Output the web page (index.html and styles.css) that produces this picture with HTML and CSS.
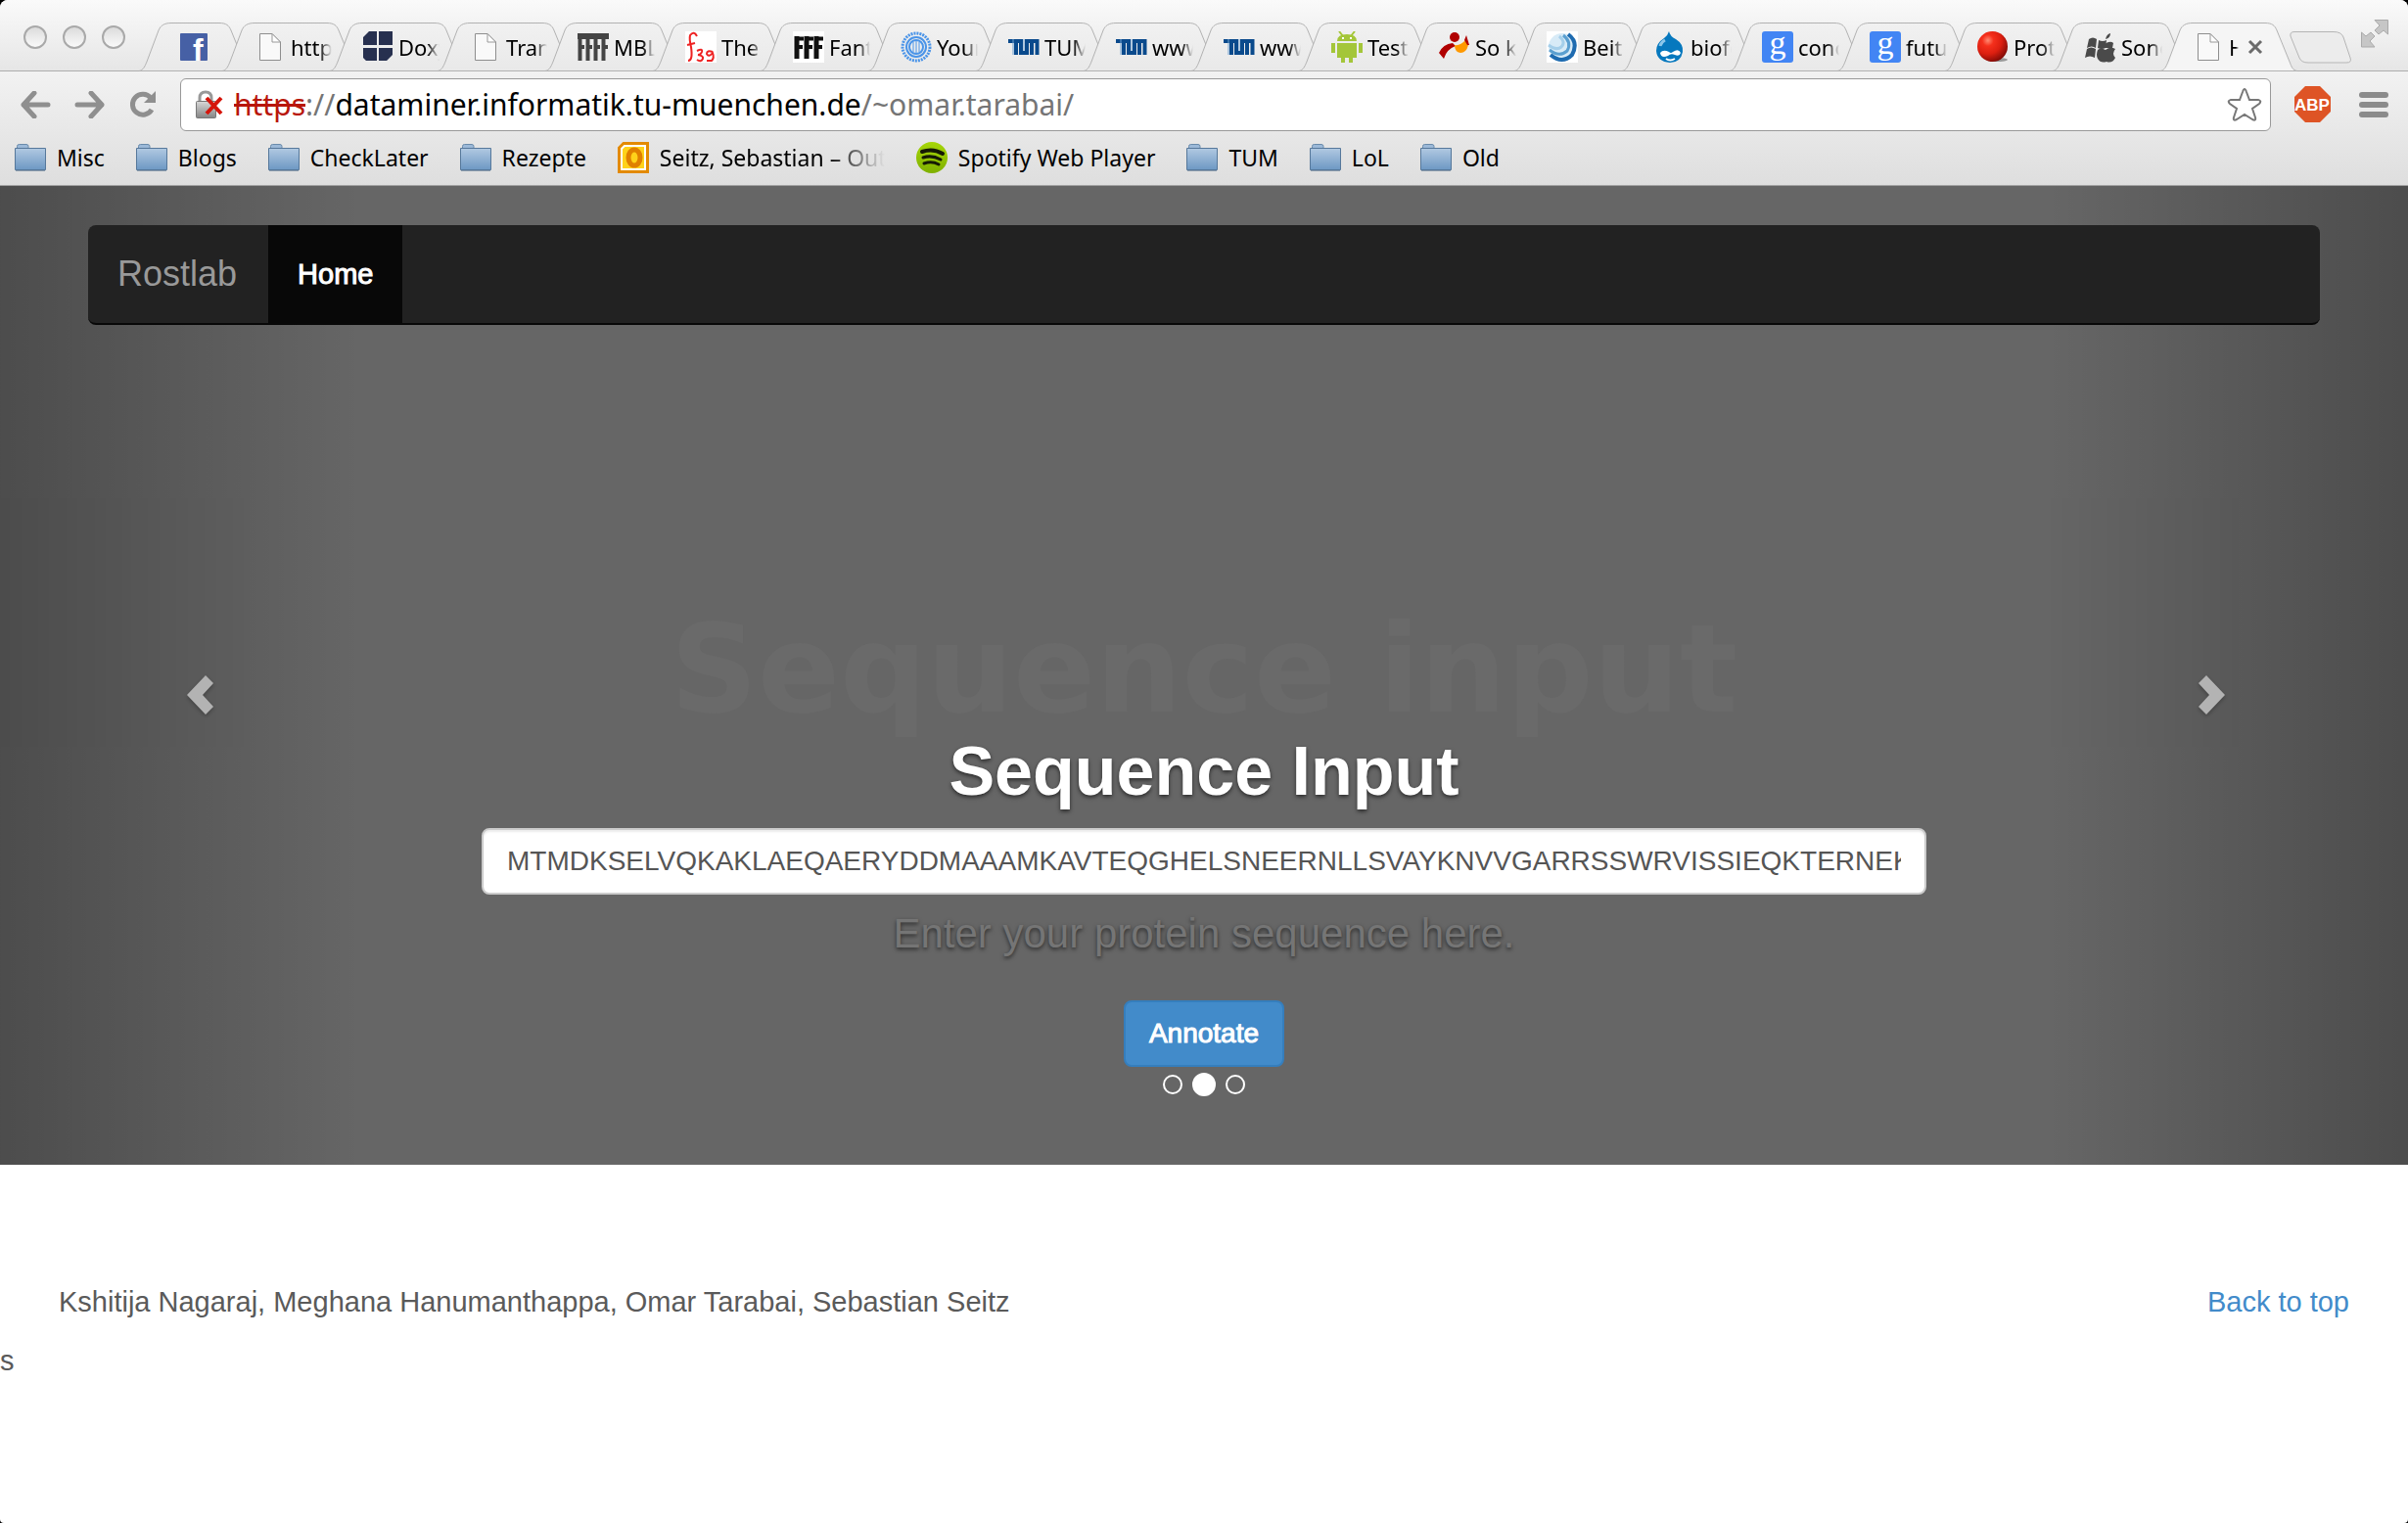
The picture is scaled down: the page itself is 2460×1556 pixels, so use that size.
FILE: index.html
```html
<!DOCTYPE html>
<html lang="en">
<head>
<meta charset="utf-8">
<title>Home</title>
<link rel="stylesheet" href="styles.css">
</head>
<body>
<svg class="defs" aria-hidden="true">
  <defs>
    <linearGradient id="gTab" x1="0" y1="0" x2="0" y2="1"><stop offset="0" stop-color="#f1f1f1"/><stop offset="1" stop-color="#e9e9e9"/></linearGradient>
    <linearGradient id="gFolder" x1="0" y1="0" x2="0" y2="1"><stop offset="0" stop-color="#b1c9e2"/><stop offset="1" stop-color="#6d98c3"/></linearGradient>
    <linearGradient id="gGrey" x1="0" y1="0" x2="0" y2="1"><stop offset="0" stop-color="#d8d8d8"/><stop offset="1" stop-color="#858585"/></linearGradient>
    <radialGradient id="gRed" cx=".35" cy=".3" r=".75"><stop offset="0" stop-color="#ff8a72"/><stop offset=".25" stop-color="#f5301c"/><stop offset=".6" stop-color="#dc1f10"/><stop offset="1" stop-color="#7d0a06"/></radialGradient>
    <linearGradient id="gSpot" x1="0" y1="0" x2="0" y2="1"><stop offset="0" stop-color="#a6d608"/><stop offset="1" stop-color="#7fb000"/></linearGradient>
  </defs>
  <symbol id="tab" viewBox="-14 0 142 50"><path d="M-13 49.500C-9 49-7 45-5 40L7 8C9 3 13 .5 20 .5H94C101 .5 104 3 106 8L119 40C121 45 122 49 127 49.500Z"/></symbol>
  <symbol id="tab-pin" viewBox="-14 0 117 50"><path d="M-13 49.500C-9 49-7 45-5 40L7 8C9 3 13 .5 20 .5H69C76 .5 79 3 81 8L94 40C96 45 97 49 102 49.500Z"/></symbol>
  <symbol id="doc" viewBox="0 0 32 32"><path d="M5.500 2.500H18L26.500 11V29.500H5.500Z" fill="#f9f9f9" stroke="#8e8e8e"/><path d="M18 2.500V11H26.500Z" fill="#fff" stroke="#999"/></symbol>
  <symbol id="folder" viewBox="0 0 32 30"><path d="M2.500 8V3.500Q2.500 1.500 4.500 1.500H12Q14 1.500 14 3.500V8Z" fill="#9cb9d8" stroke="#6a8bab"/><path d="M.5 5.500H31.500V27.500H.5Z" fill="url(#gFolder)" stroke="#56789b"/><path d="M1 28.500H31" stroke="#8a9aaa"/></symbol>
  <symbol id="google" viewBox="0 0 32 32"><rect width="32" height="32" rx="3" fill="#4285f4"/><text x="16" y="23" text-anchor="middle" font-family="Liberation Serif, serif" font-size="34" fill="#fff">g</text></symbol>
  <symbol id="tum" viewBox="0 0 32 32"><path d="M0 10H8V24M8 10H13V22H19V10H29.500V24M24 10V24" fill="none" stroke="#0a4a8c" stroke-width="4"/><path d="M5 8V24M16 20V8" stroke="#6fa0d0" stroke-width="1"/></symbol>
</svg>

<div class="window">
  <header class="browser">
    <div class="strip">
      <div class="lights"><span></span><span></span><span></span></div>
      <div class="tabs">
        <div class="tab tab-pinned"><svg class="shape" viewBox="-14 0 117 50"><use href="#tab-pin" x="-14" width="117" height="50"/></svg>
          <svg class="icon" viewBox="0 0 32 32"><rect x="2" y="2" width="28" height="28" rx="1" fill="#4660a5"/><text x="15" y="30" font-family="Liberation Sans, sans-serif" font-weight="bold" font-size="32" fill="#fff">f</text></svg></div>
        <div class="tab"><svg class="shape"><use href="#tab"/></svg><svg class="icon"><use href="#doc"/></svg><span>http:</span></div>
        <div class="tab"><svg class="shape"><use href="#tab"/></svg>
          <svg class="icon" viewBox="0 0 32 32" fill="#27304f"><path d="M7 0H15V14H1V6ZM17 0H31V14H17ZM1 17H15V30H4L1 27ZM17 17H31V24L25 30H17Z"/></svg><span>Doxy</span></div>
        <div class="tab"><svg class="shape"><use href="#tab"/></svg><svg class="icon"><use href="#doc"/></svg><span>Trans</span></div>
        <div class="tab"><svg class="shape"><use href="#tab"/></svg>
          <svg class="icon" viewBox="0 0 32 32" fill="none" stroke="#444"><path d="M0 5H32" stroke-width="6"/><path d="M2.500 2V30M10.500 2V30M18.500 2V30M26.500 2V30" stroke-width="4"/><path d="M4 16H7M12 16H15M20 16H23M28 16H31" stroke-width="4"/></svg><span>MBL</span></div>
        <div class="tab"><svg class="shape"><use href="#tab"/></svg>
          <svg class="icon" viewBox="0 0 32 32"><rect width="32" height="32" fill="#fff"/><g fill="none" stroke="#e22" stroke-width="2"><path d="M12 5Q9-1 5 4Q4 8 6 16Q8 30 3 30M2 14L10 12"/><path d="M12 20Q18 17 17 21Q16 24 13 24Q19 25 18 28Q16 32 12 29M28 21Q22 19 22 23Q24 27 28 22Q30 27 27 30H22"/></g></svg><span>The</span></div>
        <div class="tab"><svg class="shape"><use href="#tab"/></svg>
          <svg class="icon" viewBox="0 0 32 32"><rect width="32" height="32" fill="#fff"/><g fill="none" stroke="#111"><path d="M4 5V28M14 5V28M24 5V28" stroke-width="5"/><path d="M4 7.500H11M14 7.500H21M24 7.500H31M4 16H10M14 16H20M24 16H30" stroke-width="4"/></g></svg><span>Fanta</span></div>
        <div class="tab"><svg class="shape"><use href="#tab"/></svg>
          <svg class="icon" viewBox="0 0 32 32" fill="none" stroke="#4a94e8"><circle cx="16" cy="16" r="14" stroke-width="3" stroke-dasharray="2 1"/><circle cx="16" cy="16" r="10" stroke-width="2"/><circle cx="16" cy="16" r="7" stroke-width="2"/><path d="M13 11V21M16 10V22M19 11V21"/></svg><span>Your</span></div>
        <div class="tab"><svg class="shape"><use href="#tab"/></svg><svg class="icon"><use href="#tum"/></svg><span>TUM</span></div>
        <div class="tab"><svg class="shape"><use href="#tab"/></svg><svg class="icon"><use href="#tum"/></svg><span>www</span></div>
        <div class="tab"><svg class="shape"><use href="#tab"/></svg><svg class="icon"><use href="#tum"/></svg><span>www</span></div>
        <div class="tab"><svg class="shape"><use href="#tab"/></svg>
          <svg class="icon" viewBox="0 0 32 32" fill="#a4c639"><path d="M6 10Q6 3 16 3Q26 3 26 10ZM6 12H26V27H6ZM0 12H4V22H0ZM28 12H32V22H28ZM10 27H14V32H10ZM18 27H22V32H18Z"/><path d="M8 0L12 5M24 0L20 5" stroke="#a4c639" stroke-width="2"/><path d="M11 6H13V8H11ZM19 6H21V8H19Z" fill="#fff"/></svg><span>Testi</span></div>
        <div class="tab"><svg class="shape"><use href="#tab"/></svg>
          <svg class="icon" viewBox="0 0 32 32"><circle cx="16" cy="6" r="5" fill="#b00000"/><path d="M0 22Q4 13 14 12L17 15Q8 18 5 28Z" fill="#b00000"/><path d="M16 14Q22 15 27 9L30 14Q28 22 22 22Q16 21 16 14Z" fill="#f90"/><path d="M26 9L28 4L31 14L29 14Z" fill="#b00000"/></svg><span>So ke</span></div>
        <div class="tab"><svg class="shape"><use href="#tab"/></svg>
          <svg class="icon" viewBox="0 0 32 32"><rect width="32" height="32" fill="#fff"/><circle cx="16" cy="16" r="14" fill="#d8ebf7"/><g fill="none"><path d="M22 3Q33 11 26 24Q16 34 4 24" stroke="#1e6bb0" stroke-width="4"/><path d="M17 4Q26 11 21 20Q13 27 3 19" stroke="#5a9fd0" stroke-width="3"/><path d="M13 5Q20 11 15 16Q10 20 2 14" stroke="#a5cfea" stroke-width="3"/></g></svg><span>Beitra</span></div>
        <div class="tab"><svg class="shape"><use href="#tab"/></svg>
          <svg class="icon" viewBox="0 0 32 32"><path d="M15 0Q16 5 22 8Q30 13 29 21Q27 32 16 32Q3 31 2 20Q2 12 10 7Q14 4 15 0Z" fill="#0678be"/><path d="M6 22Q9 18 15 21Q17 23 19 21Q25 17 27 22Q26 26 21 24Q17 22 14 25Q7 28 6 22Z" fill="#fff"/><path d="M12 28Q16 31 21 28" stroke="#fff" fill="none" stroke-width="2"/><path d="M6 15Q7 11 11 9" stroke="#8cc6ea" fill="none" stroke-width="3"/></svg><span>biofo</span></div>
        <div class="tab"><svg class="shape"><use href="#tab"/></svg><svg class="icon"><use href="#google"/></svg><span>conc</span></div>
        <div class="tab"><svg class="shape"><use href="#tab"/></svg><svg class="icon"><use href="#google"/></svg><span>futur</span></div>
        <div class="tab"><svg class="shape"><use href="#tab"/></svg>
          <svg class="icon" viewBox="0 0 32 32"><ellipse cx="20" cy="29" rx="11" ry="2" fill="#999"/><circle cx="15.500" cy="15.500" r="15.500" fill="url(#gRed)"/></svg><span>Prote</span></div>
        <div class="tab"><svg class="shape"><use href="#tab"/></svg>
          <svg class="icon" viewBox="0 0 32 32" fill="#4a4a4a"><path d="M4 8Q8 5 12 8L11 17Q7 14 2 17ZM14 9Q18 11 22 9L21 17Q17 19 13 17ZM2 18Q6 15 11 18L10 27Q5 24 0 27Z"/><path d="M13 19Q16 16 21 19Q26 15 31 18Q27 23 31 27Q28 33 22 31Q16 33 13 28Q11 24 13 19ZM21 8Q22 3 26 2Q26 7 21 8ZM20 13Q26 9 29 12L28 17H21Z"/></svg><span>Sono</span></div>
        <div class="tab tab-active"><svg class="shape"><use href="#tab"/></svg><svg class="icon"><use href="#doc"/></svg><span>Ho</span>
          <button class="plain close" aria-label="Close tab"><svg viewBox="0 0 16 16" width="16" height="16"><path d="M2 2L14 14M14 2L2 14" stroke="#6b6b6b" stroke-width="3"/></svg></button></div>
      </div>
      <button class="plain newtab" aria-label="New tab"><svg width="64" height="33" viewBox="0 0 64 33"><path d="M5 .5H45Q53 .5 55 6L62 27Q64 32 58 32H19Q12 32 10 27L1 5Q0 .5 5 .5Z" fill="#ececec" stroke="#b5b5b5"/></svg></button>
      <button class="plain full" aria-label="Full screen"><svg width="28" height="30" viewBox="0 0 28 30" fill="#c6c6c6" stroke="#aaa"><path d="M14 .5H27.500V15L23 11L18 15L14 11L19 6Z"/><path d="M.5 13L5 17L10 13L14 17L9 22L14 28H.5Z"/></svg></button>
    </div>

    <div class="toolbar">
      <button class="plain" aria-label="Back"><svg width="32" height="28" viewBox="0 0 32 28" fill="none" stroke="#8f8f8f" stroke-width="5"><path d="M15 2L4 14L15 26M4 14H29" stroke-linecap="round" stroke-linejoin="round"/></svg></button>
      <button class="plain" aria-label="Forward"><svg width="32" height="28" viewBox="0 0 32 28" fill="none" stroke="#8f8f8f" stroke-width="5"><path d="M17 2L28 14L17 26M28 14H3" stroke-linecap="round" stroke-linejoin="round"/></svg></button>
      <button class="plain" aria-label="Reload"><svg width="28" height="28" viewBox="0 0 28 28"><path d="M22 7A10.500 10.500 0 1 0 23 19" fill="none" stroke="#8f8f8f" stroke-width="5"/><path d="M27 0V12H15Z" fill="#8f8f8f"/></svg></button>
      <div class="omnibox">
        <svg width="30" height="30" viewBox="0 0 30 30"><path d="M5 13V8Q5 2 11 2Q17 2 17 8V13" fill="none" stroke="#999" stroke-width="3"/><rect x="1.500" y="11.500" width="20" height="17" rx="1" fill="url(#gGrey)" stroke="#777"/><path d="M12 8L27 24M27 8L12 24" stroke="#d5150b" stroke-width="4"/></svg>
        <div class="url"><span class="bad">https</span><span class="dim">://</span>dataminer.informatik.tu-muenchen.de<span class="dim">/~omar.tarabai/</span></div>
        <button class="plain" aria-label="Bookmark this page"><svg width="36" height="36" viewBox="0 0 36 36"><path d="M18 2Q19 2 20 5L23 13L32 13Q36 14 33 17L26 22L29 31Q30 35 26 33L18 28L10 33Q6 35 7 31L10 22L3 17Q0 14 4 13L13 13L16 5Q17 2 18 2Z" fill="#fff" stroke="#777" stroke-width="2"/></svg></button>
      </div>
      <div class="extras">
        <button class="plain" aria-label="Adblock Plus"><svg width="38" height="38" viewBox="0 0 38 38"><path d="M11 0H26L37 11V26L26 37H11L0 26V11Z" fill="#de5425"/><text x="18" y="25" text-anchor="middle" font-family="Liberation Sans, sans-serif" font-weight="bold" font-size="17" fill="#fff">ABP</text></svg></button>
        <button class="plain" aria-label="Menu"><svg width="30" height="28" viewBox="0 0 30 28" fill="#8b8b8b"><rect y="1" width="30" height="6" rx="3"/><rect y="11" width="30" height="6" rx="3"/><rect y="21" width="30" height="6" rx="3"/></svg></button>
      </div>
    </div>

    <nav class="bookmarks" aria-label="Bookmarks">
      <a href="#"><svg class="folder"><use href="#folder"/></svg>Misc</a>
      <a href="#"><svg class="folder"><use href="#folder"/></svg>Blogs</a>
      <a href="#"><svg class="folder"><use href="#folder"/></svg>CheckLater</a>
      <a href="#"><svg class="folder"><use href="#folder"/></svg>Rezepte</a>
      <a href="#"><svg class="mark" viewBox="0 0 32 32"><path d="M6 1.500H30.500V30.500H1.500V6Z" fill="#ffd21a" stroke="#e38a00" stroke-width="3"/><path d="M7 4H28V28H4V7Z" fill="none" stroke="#fff" stroke-width="2"/><ellipse cx="17" cy="16" rx="6" ry="8" fill="none" stroke="#e08000" stroke-width="5"/></svg><span class="faded">Seitz, Sebastian – Outlook</span></a>
      <a href="#"><svg class="mark" viewBox="0 0 32 32"><circle cx="16" cy="16" r="16" fill="url(#gSpot)"/><g fill="none" stroke="#151a05" stroke-linecap="round"><path d="M6 10Q17 6 27 12" stroke-width="4"/><path d="M7 16Q16 13 25 18" stroke-width="3"/><path d="M8 22Q16 19 23 23" stroke-width="3"/></g></svg>Spotify Web Player</a>
      <a href="#"><svg class="folder"><use href="#folder"/></svg>TUM</a>
      <a href="#"><svg class="folder"><use href="#folder"/></svg>LoL</a>
      <a href="#"><svg class="folder"><use href="#folder"/></svg>Old</a>
    </nav>
  </header>

  <main class="carousel" id="top">
    <nav class="navbar">
      <a class="brand" href="#">Rostlab</a>
      <a class="active" href="#">Home</a>
    </nav>
    <form class="caption">
      <div class="ghost" aria-hidden="true">Sequence input</div>
      <h1><label for="sequence">Sequence Input</label></h1>
      <input id="sequence" type="text" value="MTMDKSELVQKAKLAEQAERYDDMAAAMKAVTEQGHELSNEERNLLSVAYKNVVGARRSSWRVISSIEQKTERNEKKQQ">
      <p>Enter your protein sequence here.</p>
      <button class="annotate" type="button">Annotate</button>
    </form>
    <div class="indicators">
      <button aria-label="Slide 1"></button><button class="on" aria-label="Slide 2"></button><button aria-label="Slide 3"></button>
    </div>
    <a class="control prev" href="#" aria-label="Previous"><svg width="30" height="42" viewBox="0 0 30 42"><path d="M20 1L28 9L17 21L28 33L20 41L1 21Z" fill="#fff"/></svg></a>
    <a class="control next" href="#" aria-label="Next"><svg width="30" height="42" viewBox="0 0 30 42"><path d="M10 1L2 9L13 21L2 33L10 41L29 21Z" fill="#fff"/></svg></a>
  </main>

  <footer class="footer">
    <p>Kshitija Nagaraj, Meghana Hanumanthappa, Omar Tarabai, Sebastian Seitz</p>
    <a href="#top">Back to top</a>
  </footer>
  <div class="stray">s</div>
</div>
</body>
</html>
```
FILE: styles.css
```css
* { box-sizing: border-box; }

html { background: #000; }

body {
  margin: 0;
  font-family: "Liberation Sans", Arial, sans-serif;
  font-size: 29px;
  line-height: 40px;
  color: #5a5a5a;
}

a { color: #428bca; text-decoration: none; }
svg { display: block; flex: none; }
.defs { position: absolute; width: 0; height: 0; }

.plain {
  border: 0;
  padding: 0;
  background: none;
  flex: none;
}

.window {
  min-height: 100vh;
  background: #fff;
  border-radius: 8px 8px 4px 4px;
  overflow: hidden;
}

/* Browser frame */
.browser {
  font-family: "Noto Sans", sans-serif;
  font-size: 23px;
  color: #000;
  background: linear-gradient(#fafafa 0, #e6e6e6 72px, #f2f2f2 73px, #dedede 100%);
  border-bottom: 1px solid #a0a0a0;
}

.strip {
  display: flex;
  height: 73px;
  border-bottom: 1px solid #adadad;
}

.lights {
  display: flex;
  gap: 16px;
  width: 155px;
  padding: 26px 0 0 24px;
}

.lights span {
  width: 24px;
  height: 24px;
  border: 2px solid #a9a9a9;
  border-radius: 50%;
  background: linear-gradient(#dcdcdc, #fafafa);
}

.tabs {
  display: flex;
  padding-top: 23px;
}

.tab {
  position: relative;
  isolation: isolate;
  display: flex;
  align-items: center;
  gap: 5px;
  width: 110px;
  height: 50px;
  padding-left: 20px;
  font-size: 22px;
}

.tab-pinned { width: 85px; padding-left: 27px; }

.shape {
  position: absolute;
  z-index: -1;
  left: -14px;
  top: 0;
  width: 142px;
  height: 50px;
  fill: url(#gTab);
  stroke: #b2b2b2;
}

.tab-pinned .shape { width: 117px; }

.icon { width: 32px; height: 32px; }

.tab span {
  width: 42px;
  overflow: hidden;
  white-space: nowrap;
  mask-image: linear-gradient(to right, #000 70%, transparent);
}

.tab .close { margin-left: 4px; }

.tab-active { z-index: 1; }
.tab-active .shape { fill: #f5f5f5; }
.tab-active span { width: 10px; }

.newtab { margin: 32px 0 0 9px; align-self: flex-start; }
.full { margin: 20px 20px 0 auto; align-self: flex-start; }

.toolbar {
  display: flex;
  align-items: center;
  gap: 24px;
  padding: 7px 20px 0;
}

.omnibox {
  flex: 1;
  display: flex;
  align-items: center;
  height: 54px;
  padding: 0 8px 0 14px;
  border: 1px solid #999;
  border-radius: 6px;
  background: #fff;
  gap: 10px;
}

.extras {
  display: flex;
  align-items: center;
  gap: 28px;
}

.url { flex: 1; font-size: 30px; white-space: nowrap; }
.dim { color: #757575; }
.bad { color: #b8160a; text-decoration: line-through; text-decoration-thickness: 3px; }

.bookmarks {
  display: flex;
  gap: 32px;
  padding: 7px 15px 8px;
}

.bookmarks a {
  display: flex;
  align-items: center;
  gap: 11px;
  color: #000;
  white-space: nowrap;
}

.folder { width: 32px; height: 30px; }
.mark { width: 32px; height: 32px; }

.faded {
  width: 230px;
  overflow: hidden;
  mask-image: linear-gradient(to right, #000 75%, transparent);
}

/* Carousel */
.carousel {
  position: relative;
  display: flex;
  flex-direction: column;
  min-height: 1000px;
  padding: 40px 90px 70px;
  background: #666;
}

.navbar {
  position: relative;
  z-index: 2;
  display: flex;
  background: #222;
  border-bottom: 2px solid #080808;
  border-radius: 8px;
}

.navbar a { padding: 30px; color: #fff; }
.navbar .brand { padding-right: 32px; font-size: 36px; color: #999; }
.navbar .active { background: #080808; -webkit-text-stroke: 1px #fff; }

.caption {
  display: flex;
  flex-direction: column;
  align-items: center;
  margin-top: auto;
  color: #fff;
  text-align: center;
}

.ghost {
  font: bold 124px/128px "DejaVu Sans", sans-serif;
  color: #6a6a6a;
}

.caption h1 {
  margin: 0 0 18px;
  font-size: 70px;
  line-height: 80px;
  text-shadow: 0 2px 4px rgba(0, 0, 0, .6);
}

.caption input {
  width: 1476px;
  max-width: 100%;
  height: 68px;
  padding: 0 24px;
  border: 2px solid #ccc;
  border-radius: 8px;
  box-shadow: inset 0 2px 2px rgba(0, 0, 0, .08);
  font: inherit;
  font-size: 28px;
  color: #555;
}

.caption p {
  margin: 10px 0 38px;
  font-size: 42px;
  line-height: 60px;
  color: #757575;
  text-shadow: 0 2px 4px rgba(0, 0, 0, .6);
}

.annotate {
  height: 68px;
  padding: 0 24px;
  border: 2px solid #357ebd;
  border-radius: 8px;
  background: #428bca;
  font: inherit;
  font-size: 28px;
  color: #fff;
  -webkit-text-stroke: 1px #fff;
}

.indicators {
  position: relative;
  z-index: 2;
  display: flex;
  justify-content: center;
  align-items: center;
  gap: 10px;
  margin-top: 6px;
}

.indicators button {
  width: 20px;
  height: 20px;
  padding: 0;
  border: 2px solid #fff;
  border-radius: 50%;
  background: none;
}

.indicators .on { width: 24px; height: 24px; background: #fff; }

.control {
  position: absolute;
  top: 0;
  bottom: 0;
  width: 15%;
  display: flex;
  align-items: center;
  justify-content: center;
  padding-top: 40px;
  opacity: .5;
}

.control svg { filter: drop-shadow(0 2px 2px rgba(0, 0, 0, .6)); }

.prev { left: 0; padding-left: 40px; background: linear-gradient(to right, rgba(0, 0, 0, .5), transparent); }
.next { right: 0; padding-right: 34px; background: linear-gradient(to left, rgba(0, 0, 0, .5), transparent); }

/* Footer */
.footer {
  display: flex;
  justify-content: space-between;
  padding: 120px 60px 20px;
}

.footer p { margin: 0; }
```
